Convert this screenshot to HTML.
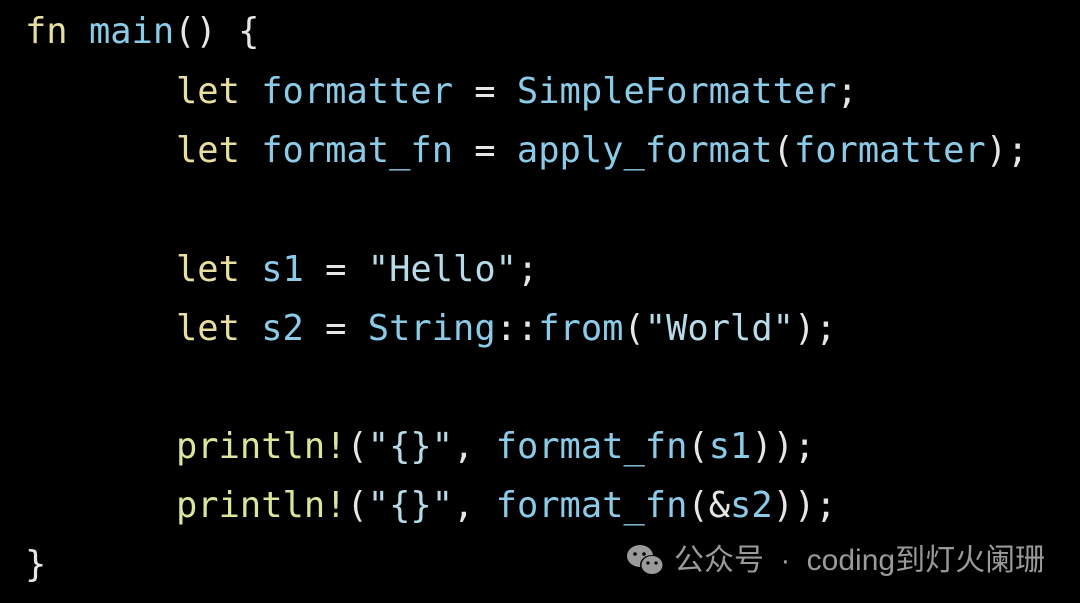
<!DOCTYPE html>
<html><head><meta charset="utf-8"><style>
html,body{margin:0;padding:0;background:#000;width:1080px;height:603px;overflow:hidden}
.l{position:absolute;left:25px;font-family:"DejaVu Sans Mono","Liberation Mono",monospace;font-size:35.4px;line-height:40px;white-space:pre;color:#e6e6e6}
.k{color:#e8dea0}.i{color:#8ccbe8}.m{color:#d9e69c}.s{color:#b8dbe8}
.wm{position:absolute;left:626px;top:541px;font-family:"Liberation Sans","Noto Sans CJK SC",sans-serif;font-size:30px;color:#9a9a9a;line-height:40px;display:flex;align-items:center;white-space:pre}
</style></head><body>
<div class="l" style="top:12px"><span class="k">fn</span> <span class="i">main</span>() {</div>
<div class="l" style="top:72px;left:176px"><span class="k">let</span> <span class="i">formatter</span> = <span class="i">SimpleFormatter</span>;</div>
<div class="l" style="top:131px;left:176px"><span class="k">let</span> <span class="i">format_fn</span> = <span class="i">apply_format</span>(<span class="i">formatter</span>);</div>
<div class="l" style="top:250px;left:176px"><span class="k">let</span> <span class="i">s1</span> = <span class="s">"Hello"</span>;</div>
<div class="l" style="top:309px;left:176px"><span class="k">let</span> <span class="i">s2</span> = <span class="i">String</span>::<span class="i">from</span>(<span class="s">"World"</span>);</div>
<div class="l" style="top:427px;left:176px"><span class="m">println!</span>(<span class="s">"{}"</span>, <span class="i">format_fn</span>(<span class="i">s1</span>));</div>
<div class="l" style="top:486px;left:176px"><span class="m">println!</span>(<span class="s">"{}"</span>, <span class="i">format_fn</span>(&amp;<span class="i">s2</span>));</div>
<div class="l" style="top:545px">}</div>
<div class="wm"><svg width="40" height="34" viewBox="0 0 40 34"><ellipse cx="14" cy="12" rx="13" ry="11" fill="#9a9a9a"/><circle cx="9" cy="10" r="1.8" fill="#000"/><circle cx="18" cy="10" r="1.8" fill="#000"/><ellipse cx="26" cy="21" rx="12" ry="10" fill="#000"/><ellipse cx="26" cy="21" rx="10.5" ry="9" fill="#9a9a9a"/><circle cx="22" cy="19" r="1.6" fill="#000"/><circle cx="30" cy="19" r="1.6" fill="#000"/></svg><span style="margin-left:8px;word-spacing:8px">公众号 · coding到灯火阑珊</span></div>
</body></html>
